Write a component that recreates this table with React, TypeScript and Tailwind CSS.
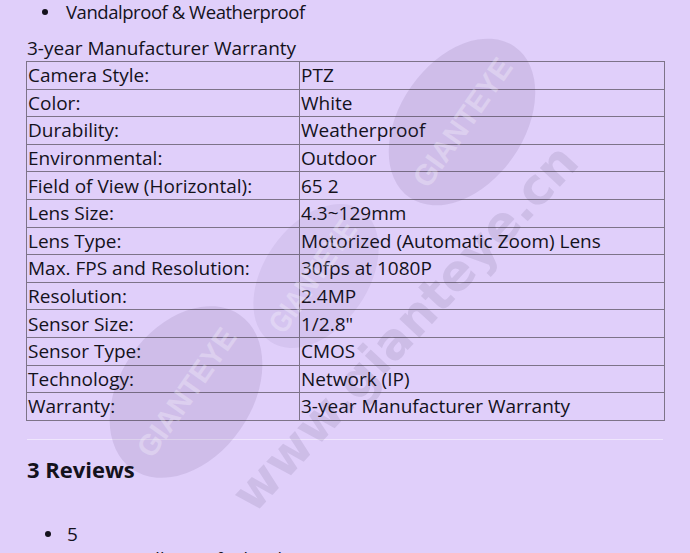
import React from "react";

const rows: [string, string][] = [
  ["Camera Style:", "PTZ"],
  ["Color:", "White"],
  ["Durability:", "Weatherproof"],
  ["Environmental:", "Outdoor"],
  ["Field of View (Horizontal):", "65 2"],
  ["Lens Size:", "4.3~129mm"],
  ["Lens Type:", "Motorized (Automatic Zoom) Lens"],
  ["Max. FPS and Resolution:", "30fps at 1080P"],
  ["Resolution:", "2.4MP"],
  ["Sensor Size:", '1/2.8"'],
  ["Sensor Type:", "CMOS"],
  ["Technology:", "Network (IP)"],
  ["Warranty:", "3-year Manufacturer Warranty"],
];

function Watermark() {
  return (
    <svg
      className="absolute left-0 top-0 pointer-events-none"
      width={690}
      height={553}
      viewBox="0 0 690 553"
    >
      <g fill="#3a2a55">
        <ellipse cx={462} cy={122} rx={62} ry={92} transform="rotate(35 462 122)" fillOpacity={0.1} />
        <ellipse cx={316} cy={276} rx={52} ry={80} transform="rotate(35 316 276)" fillOpacity={0.06} />
        <ellipse cx={186} cy={392} rx={66} ry={94} transform="rotate(35 186 392)" fillOpacity={0.1} />
      </g>
      <g
        fill="#ffffff"
        fillOpacity={0.28}
        style={{ fontFamily: "'Liberation Sans Narrow', 'Liberation Sans', sans-serif", fontWeight: 700 }}
        fontSize={30}
        textAnchor="middle"
      >
        <text x={462} y={133} transform="rotate(-55 462 122)" textLength={150} lengthAdjust="spacingAndGlyphs">GIANTEYE</text>
        <text x={312} y={287} transform="rotate(-55 312 276)" textLength={130} lengthAdjust="spacingAndGlyphs">GIANTEYE</text>
        <text x={186} y={403} transform="rotate(-55 186 392)" textLength={150} lengthAdjust="spacingAndGlyphs">GIANTEYE</text>
      </g>
      <text
        x={405}
        y={345}
        transform="rotate(-47 405 328)"
        textAnchor="middle"
        fill="#3a2a55"
        fillOpacity={0.11}
        fontSize={50}
        style={{ fontFamily: "'DejaVu Sans', sans-serif", fontWeight: 700 }}
        textLength={480}
        lengthAdjust="spacingAndGlyphs"
      >
        www.gianteye.cn
      </text>
    </svg>
  );
}

export default function App() {
  return (
    <div
      className="relative w-[690px] h-[553px] overflow-hidden bg-[#e0cffa] text-[#14121c]"
      style={{ fontFamily: "'Open Sans', 'Noto Sans', sans-serif" }}
    >
      <div className="flex items-center h-[24px] pl-[42px] text-[18.5px] tracking-[-0.45px] leading-[24px]">
        <span className="w-[6px] h-[6px] rounded-full bg-[#14121c] mr-[18px]" />
        <span>Vandalproof &amp; Weatherproof</span>
      </div>
      <div className="pl-[27px] pt-[11px] text-[19px] leading-[26px]">3-year Manufacturer Warranty</div>
      <div className="px-[26px]">
        <table className="w-[639px] border-collapse text-[19px]">
          <tbody>
            {rows.map(([k, v]) => (
              <tr key={k}>
                <td className="w-[273px] border border-[#7d7388] px-[1px] h-[27.6px] leading-[26px] py-0 whitespace-nowrap">{k}</td>
                <td className="border border-[#7d7388] px-[1px] h-[27.6px] leading-[26px] py-0 whitespace-nowrap">{v}</td>
              </tr>
            ))}
          </tbody>
        </table>
      </div>
      <div className="mx-[27px] mt-[18px] h-[1px] bg-[#efe6fd]" />
      <h2 className="pl-[27px] pt-[15px] text-[22px] font-bold leading-[28px]">3 Reviews</h2>
      <div className="flex items-center h-[24px] mt-[39px] pl-[45px] text-[19px] leading-[24px]">
        <span className="w-[6px] h-[6px] rounded-full bg-[#14121c] mr-[16px]" />
        <span>5</span>
      </div>
      <div className="pl-[67px] mt-[1px] text-[18px] leading-[24px] whitespace-nowrap">we are really satisfied with it</div>
      <Watermark />
    </div>
  );
}
